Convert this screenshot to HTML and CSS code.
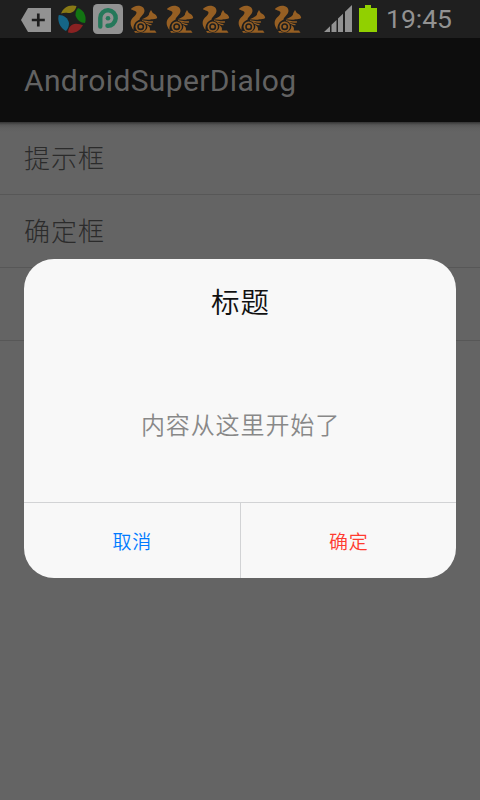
FILE: index.html
```html
<!DOCTYPE html>
<html lang="zh-CN">
<head>
    <meta charset="UTF-8">
    <meta name="viewport" content="width=device-width, initial-scale=1.0">
    <title>AndroidSuperDialog</title>
    <link rel="stylesheet" href="styles.css">
</head>
<body>
    <svg class="sprite" aria-hidden="true">
        <symbol id="squirrel" viewBox="0 0 28 28">
            <path d="M3.500 25C-.5 20 0 15.500 3 12.500C5 10.500 6.500 9.500 6.500 7.500C6 5.500 3.500 6 .8 4C3 1.500 6.500 .2 9.500 .8C14 1.500 15.500 5 13.800 8.300C12.300 11 9.500 12.500 9.500 14.800C6 16 3 19.500 3.500 25Z"/>
            <path d="M21 5L22.800 8C25.500 9 27 10.800 27.200 13C25.500 14.200 23.500 14 21.500 14.300C17.500 15.500 14.500 14.300 11.500 14.300C14.500 13.500 17 12 18.800 10C19.200 8 20 6.500 21 5Z"/>
            <path class="limb" d="M12 15.800C15.500 15.600 17.500 17.800 23 16.800M15 17.600C17.500 18.500 18.500 19.800 21.500 19.600"/>
            <path d="M17 20C19.500 21 20.500 23 19.800 25.500H25L26.500 27.800H5L4.200 26H14C17 25 17.800 22.500 17 20Z"/>
            <circle class="hole" cx="10.700" cy="21.700" r="6"/>
            <circle cx="10.700" cy="21.700" r="5.200"/>
            <circle class="ring" cx="10.700" cy="21.700" r="2.700"/>
        </symbol>
    </svg>

    <header class="status-bar">
        <div class="notifications">
            <svg class="icon tag" viewBox="0 0 30 24">
                <path d="M7 0H30V24H7L0 12Z" fill="#929292"/>
                <path d="M17.300 5.500V18.500M10.800 12H23.800" stroke="#1f1f1f" stroke-width="2.700"/>
            </svg>
            <svg class="icon pinwheel" viewBox="0 0 28 28">
                <path d="M3 8.500C5 3 11-1 18.500 1C17.500 6 14 8.500 10 8C7 7.500 5 8 3 8.500Z" fill="#897915"/>
                <path d="M20 3C26 5 29 12 27 18C22.500 18 19 15 17.500 10.500C17.500 8 18 5 20 3Z" fill="#127412"/>
                <path d="M25 20C22 26 17 29 10 27.500C10.500 22.500 13 19 18 18.800C21 18.800 23 20 25 20Z" fill="#8a2222"/>
                <path d="M8 26C2 23-1 16 .8 10C6 10 10 13 11 18C11 21 10 24 8 26Z" fill="#156586"/>
            </svg>
            <svg class="icon app" viewBox="0 0 30 30">
                <rect width="30" height="30" rx="4.500" fill="#929292"/>
                <path d="M7.300 22.500V13.800A7.700 7.700 0 1 1 14.500 21.700" fill="none" stroke="#25785a" stroke-width="4.400" stroke-linecap="round"/>
                <circle cx="15" cy="14.200" r="2.300" fill="#25785a"/>
            </svg>
            <svg class="icon squirrel"><use href="#squirrel"/></svg>
            <svg class="icon squirrel"><use href="#squirrel"/></svg>
            <svg class="icon squirrel"><use href="#squirrel"/></svg>
            <svg class="icon squirrel"><use href="#squirrel"/></svg>
            <svg class="icon squirrel"><use href="#squirrel"/></svg>
        </div>
        <svg class="icon signal" viewBox="0 0 28 27">
            <path d="M0 27L6 21.200V27ZM7.500 27V19.700L12.500 15V27ZM14 27V13.500L19 8.700V27ZM21 27V6.700L28 0V27Z" fill="#929292"/>
        </svg>
        <svg class="icon battery" viewBox="0 0 18 27">
            <path d="M6 0H12V3H18V27H0V3H6Z" fill="#91d000"/>
        </svg>
        <span class="clock">19:45</span>
    </header>

    <h1 class="action-bar">AndroidSuperDialog</h1>

    <ul class="list">
        <li>提示框</li>
        <li>确定框</li>
        <li></li>
    </ul>

    <div class="overlay">
        <div class="dialog">
            <h2 class="dialog-title">标题</h2>
            <p class="dialog-content">内容从这里开始了</p>
            <div class="dialog-buttons">
                <button class="btn cancel">取消</button>
                <button class="btn confirm">确定</button>
            </div>
        </div>
    </div>
</body>
</html>
```

FILE: styles.css
```css
* {
    box-sizing: border-box;
}
body {
    margin: 0;
    height: 800px;
    overflow: hidden;
    background-color: #646464;
    font-family: Roboto, "Noto Sans CJK SC", sans-serif;
    font-weight: 350;
}
.sprite {
    display: none;
}
.status-bar {
    display: flex;
    height: 38px;
    padding-left: 21px;
    background-color: #1f1f1f;
}
.notifications {
    display: flex;
    align-items: center;
    width: 303px;
}
.icon {
    display: block;
    flex: none;
}
.tag {
    width: 30px;
    height: 24px;
    margin: 2px 7px 0 0;
}
.pinwheel {
    width: 28px;
    height: 28px;
    margin-right: 7px;
}
.app {
    width: 30px;
    height: 30px;
    margin-right: 7px;
}
.squirrel {
    width: 28px;
    height: 28px;
    margin-right: 8px;
    fill: #965f23;
}
.limb {
    fill: none;
    stroke: #965f23;
    stroke-width: 1.3;
}
.hole {
    fill: #1f1f1f;
}
.ring {
    fill: none;
    stroke: #1f1f1f;
    stroke-width: 1.6;
}
.signal {
    width: 28px;
    height: 27px;
    margin-top: 5px;
}
.battery {
    width: 18px;
    height: 27px;
    margin: 5px 0 0 7px;
}
.clock {
    margin-left: 9px;
    color: #929292;
    font-size: 26.5px;
    font-weight: 400;
    line-height: 38px;
}
.action-bar {
    height: 84px;
    margin: 0;
    padding-left: 24px;
    background-color: #0d0d0d;
    color: #626262;
    font-size: 30px;
    font-weight: 400;
    line-height: 86px;
    letter-spacing: 0.35px;
}
.list {
    height: 678px;
    margin: 0;
    padding: 0;
    list-style: none;
    background: linear-gradient(#343434, #575757 3px, #606060 6px, #646464 10px);
}
.list li {
    height: 73px;
    padding-left: 24px;
    border-bottom: 1px solid #575757;
    color: #2b2b2b;
    font-size: 26px;
    font-weight: 300;
    line-height: 75px;
    letter-spacing: 1px;
}
.overlay {
    position: absolute;
    top: 0;
    left: 0;
    display: flex;
    align-items: center;
    width: 480px;
    height: 800px;
    padding: 37px 24px 0;
}
.dialog {
    width: 432px;
    height: 319px;
    overflow: hidden;
    border-radius: 30px;
    background-color: #f8f8f8;
    text-align: center;
}
.dialog-title {
    height: 88px;
    margin: 0;
    padding-left: 1px;
    color: #111;
    font-size: 28.5px;
    font-weight: 350;
    line-height: 90px;
    letter-spacing: 1px;
}
.dialog-content {
    height: 155px;
    margin: 0;
    padding-left: 1px;
    color: #888;
    font-size: 24px;
    line-height: 158px;
    letter-spacing: 0.9px;
}
.dialog-buttons {
    display: flex;
    height: 76px;
    border-top: 1px solid #d2d3d5;
}
.btn {
    flex: 1;
    padding: 0 0 0 1px;
    border: none;
    background: none;
    font-family: inherit;
    font-size: 19px;
    font-weight: 350;
    letter-spacing: 0.8px;
}
.cancel {
    color: #007aff;
}
.confirm {
    border-left: 1px solid #d2d3d5;
    color: #ff3b30;
}
```
